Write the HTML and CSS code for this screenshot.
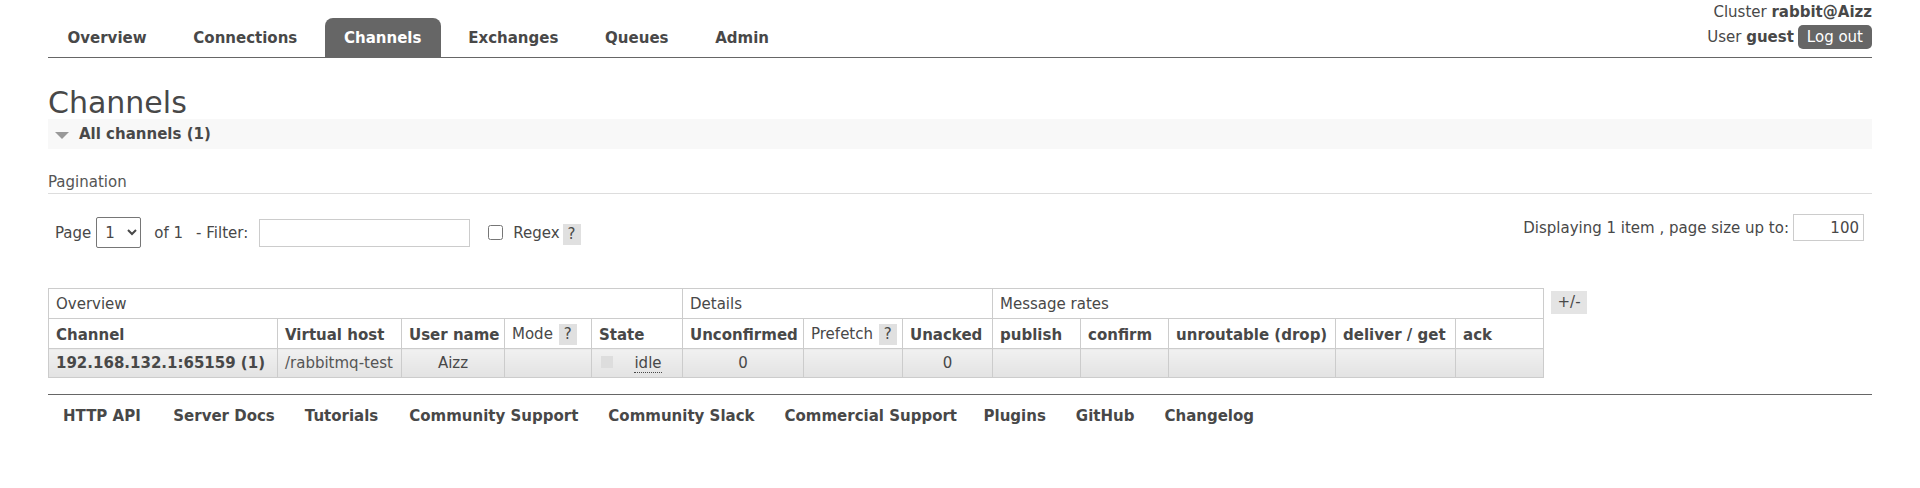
FILE: index.html
```html
<!DOCTYPE html>
<html>
<head>
<meta charset="utf-8">
<title>RabbitMQ Management</title>
<link rel="stylesheet" href="styles.css">
</head>
<body>
<div class="header">
  <ul class="menu">
    <li><a href="#">Overview</a></li>
    <li><a href="#">Connections</a></li>
    <li><a href="#" class="selected">Channels</a></li>
    <li><a href="#">Exchanges</a></li>
    <li><a href="#">Queues</a></li>
    <li><a href="#">Admin</a></li>
  </ul>
  <div class="login">
    <div class="login-line">Cluster <b>rabbit@Aizz</b></div>
    <div class="login-line user">User&nbsp;<b>guest</b><span class="logout">Log out</span></div>
  </div>
</div>

<div class="main">
  <h1>Channels</h1>
  <div class="section-bar"><span class="tri"></span><span class="section-title">All channels (1)</span></div>

  <h3 class="pag-title">Pagination</h3>
  <div class="pag-row">
    <div class="pag-left">
      <span>Page</span>
      <select class="page-select"><option>1</option></select>
      <span class="of">of 1</span>
      <span class="filter-label">- Filter:</span>
      <input type="text" class="filter-input">
      <input type="checkbox" class="regex-check">
      <span class="regex-label">Regex</span>
      <span class="help">?</span>
    </div>
    <div class="pag-right">
      <span>Displaying 1 item , page size up to:</span>
      <input type="text" class="size-input" value="100">
    </div>
  </div>

  <div class="table-wrap">
    <table class="list">
      <colgroup>
        <col style="width:229px"><col style="width:124px"><col style="width:103px"><col style="width:87px"><col style="width:91px">
        <col style="width:121px"><col style="width:99px"><col style="width:90px">
        <col style="width:88px"><col style="width:88px"><col style="width:167px"><col style="width:120px"><col style="width:88px">
      </colgroup>
      <thead>
        <tr class="group">
          <th colspan="5">Overview</th>
          <th colspan="3">Details</th>
          <th colspan="5">Message rates</th>
        </tr>
        <tr class="head">
          <th>Channel</th>
          <th>Virtual host</th>
          <th>User name</th>
          <th class="plain">Mode <span class="help">?</span></th>
          <th>State</th>
          <th>Unconfirmed</th>
          <th class="plain">Prefetch <span class="help">?</span></th>
          <th>Unacked</th>
          <th>publish</th>
          <th>confirm</th>
          <th>unroutable (drop)</th>
          <th>deliver / get</th>
          <th>ack</th>
        </tr>
      </thead>
      <tbody>
        <tr>
          <td class="strong">192.168.132.1:65159 (1)</td>
          <td class="vhost">/rabbitmq-test</td>
          <td class="c">Aizz</td>
          <td></td>
          <td class="state"><span class="status-key"></span><abbr class="state-text">idle</abbr></td>
          <td class="c">0</td>
          <td></td>
          <td class="c">0</td>
          <td></td>
          <td></td>
          <td></td>
          <td></td>
          <td></td>
        </tr>
      </tbody>
    </table>
    <span class="toggle">+/-</span>
  </div>
</div>

<div class="footer">
  <ul class="footer-links">
    <li><a href="#">HTTP API</a></li>
    <li><a href="#">Server Docs</a></li>
    <li><a href="#">Tutorials</a></li>
    <li><a href="#">Community Support</a></li>
    <li><a href="#">Community Slack</a></li>
    <li><a href="#">Commercial Support</a></li>
    <li><a href="#">Plugins</a></li>
    <li><a href="#">GitHub</a></li>
    <li><a href="#">Changelog</a></li>
  </ul>
</div>
</body>
</html>
```

FILE: styles.css
```css
* { box-sizing: border-box; }

body {
  margin: 0;
  padding: 0 48px;
  font-family: "DejaVu Sans", Verdana, sans-serif;
  font-size: 15px;
  line-height: 18px;
  color: #484848;
  background: #fff;
}

a { color: #484848; text-decoration: none; }

/* header */
.header {
  display: flex;
  justify-content: space-between;
  height: 58px;
  border-bottom: 1px solid #666;
}

.menu {
  display: flex;
  list-style: none;
  margin: 0;
  padding: 18px 0 0 0;
}

.menu li { padding-right: 1.5px; }

.menu a {
  display: block;
  padding: 10.5px 19.5px;
  margin-right: 6.25px;
  font-weight: bold;
  line-height: 18px;
}

.menu a.selected {
  background: #666;
  color: #fff;
  border-radius: 8px 8px 0 0;
}

.login {
  display: flex;
  flex-direction: column;
  align-items: flex-end;
  padding-top: 3px;
}

.login-line { line-height: 18px; }

.login-line.user {
  display: flex;
  align-items: center;
  margin-top: 4px;
}

.logout {
  display: inline-block;
  margin-left: 4px;
  height: 24px;
  line-height: 24px;
  padding: 0 9px;
  background: #666;
  color: #fff;
  border-radius: 5px;
}

/* main */
h1 {
  margin: 28px 0 0 0;
  font-size: 30px;
  font-weight: normal;
  line-height: 33px;
}

.section-bar {
  display: flex;
  align-items: center;
  height: 30px;
  background: #f8f8f8;
  padding-left: 7px;
}

.tri {
  width: 0;
  height: 0;
  border-left: 7.5px solid transparent;
  border-right: 7.5px solid transparent;
  border-top: 7px solid #999;
  margin-top: 2px;
}

.section-title {
  margin-left: 10px;
  font-weight: bold;
}

.pag-title {
  margin: 24px 0 0 0;
  padding-bottom: 2px;
  font-size: 15px;
  font-weight: normal;
  line-height: 18px;
  color: #555;
  border-bottom: 1px solid #ddd;
}

.pag-row {
  display: flex;
  justify-content: space-between;
  align-items: flex-start;
  margin-top: 22px;
}

.pag-left {
  display: flex;
  align-items: center;
  height: 32px;
  padding-left: 7px;
  padding-top: 1px;
}

.page-select {
  margin-left: 5px;
  width: 45px;
  height: 31px;
  font-family: "DejaVu Sans", Verdana, sans-serif;
  font-size: 15px;
  color: #484848;
  border: 1px solid #767676;
  border-radius: 2px;
  background: #fff;
  padding: 0 0 0 4px;
}

.of { margin-left: 13px; }
.filter-label { margin-left: 13px; }

.filter-input {
  margin: 0 0 0 11px;
  width: 211px;
  height: 28px;
  border: 1px solid #ccc;
  font-family: "DejaVu Sans", Verdana, sans-serif;
  font-size: 15px;
}

.regex-check {
  margin: 0 0 0 18px;
  width: 15px;
  height: 15px;
}

.regex-label { margin-left: 10px; }

.help {
  display: inline-block;
  width: 18px;
  height: 21px;
  line-height: 21px;
  text-align: center;
  background: #e0e0e0;
  color: #484848;
  font-weight: normal;
}

.pag-left .help { margin-left: 3px; margin-top: 4px; }

.pag-right {
  display: flex;
  align-items: center;
  height: 27px;
  margin-top: -2px;
  margin-right: 8px;
}

.size-input {
  margin: 0 0 0 4px;
  width: 71px;
  height: 27px;
  border: 1px solid #ccc;
  text-align: right;
  padding: 0 4px;
  font-family: "DejaVu Sans", Verdana, sans-serif;
  font-size: 15px;
  color: #484848;
}

/* table */
.table-wrap {
  display: flex;
  align-items: flex-start;
  gap: 7px;
  margin-top: 40px;
}

table.list {
  border-collapse: collapse;
  table-layout: fixed;
  width: 1495px;
  border: 1px solid #ccc;
}

table.list th,
table.list td {
  padding: 0 7px;
  text-align: left;
  white-space: nowrap;
  overflow: hidden;
}

tr.group th {
  height: 30px;
  font-weight: normal;
  border: 1px solid #ccc;
}

tr.head th {
  height: 30px;
  font-weight: bold;
  border: 1px solid #ccc;
  padding-top: 2px;
}

tr.head th.plain { font-weight: normal; }

tr.head th .help { margin-left: 1px; vertical-align: baseline; }

tbody td {
  height: 29px;
  border: 1px solid #ccc;
  background: linear-gradient(#f1f1f1, #e3e3e3);
}

td.strong { font-weight: bold; }
td.vhost { color: #555; }
td.c { text-align: center !important; }

td.state {
  position: relative;
  text-align: center !important;
}

.status-key {
  position: absolute;
  left: 9px;
  top: 7px;
  width: 12px;
  height: 12px;
  background: #ddd;
}

.state-text {
  text-decoration: none;
  border-bottom: 1px dotted #484848;
  margin-left: 22px;
}

.toggle {
  display: inline-block;
  margin-top: 3px;
  width: 36px;
  height: 23px;
  line-height: 23px;
  text-align: center;
  background: #e4e4e4;
}

/* footer */
.footer {
  margin-top: 16px;
  border-top: 1px solid #666;
  padding-top: 12px;
}

.footer-links {
  display: flex;
  list-style: none;
  margin: 0;
  padding: 0;
}

.footer-links a {
  display: block;
  padding: 0 15px;
  font-weight: bold;
  line-height: 18px;
}

.footer-links li:nth-child(1) a { padding-right: 17.5px; }
.footer-links li:nth-child(3) a { padding-right: 16px; }
.footer-links li:nth-child(6) a { padding-right: 11.5px; }
```
